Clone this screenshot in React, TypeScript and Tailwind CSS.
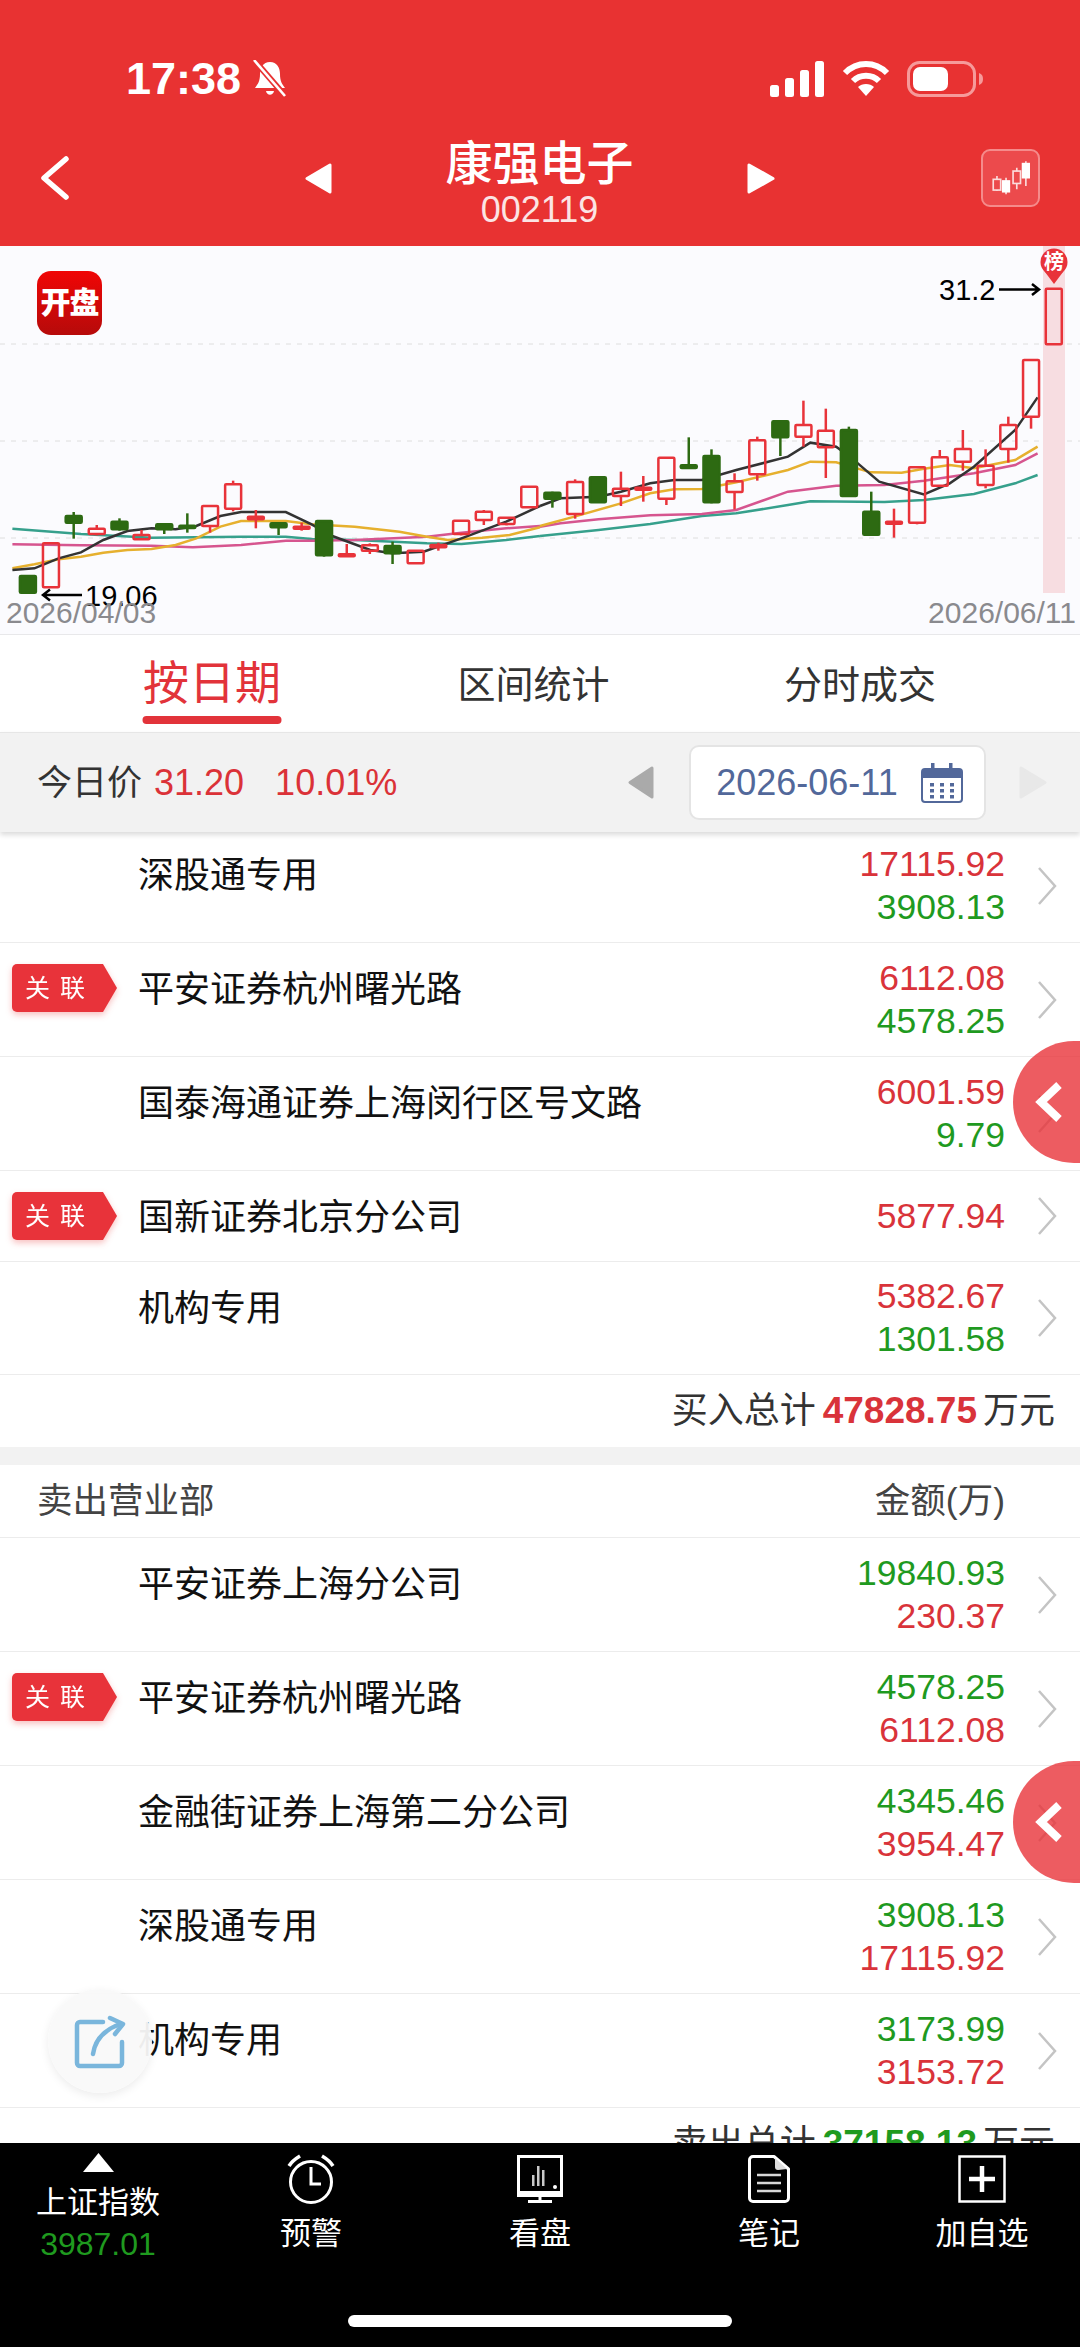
import React from 'react';

type Candle = [number, number, number, number, number, 'r' | 'g'];

// [x, bodyTop, bodyBottom, wickTop, wickBottom, colour], measured on the two halves of the chart
const leftCandles: Candle[] = [
  [81, 1008, 1058, 1005, 1062, 'g'],
  [148, 910, 1042, 910, 1042, 'r'],
  [214, 828, 848, 816, 896, 'g'],
  [281, 866, 882, 855, 886, 'r'],
  [347, 845, 868, 835, 872, 'g'],
  [411, 885, 898, 870, 900, 'r'],
  [477, 853, 868, 850, 882, 'g'],
  [544, 857, 864, 820, 878, 'g'],
  [610, 798, 858, 798, 878, 'r'],
  [677, 733, 806, 722, 814, 'r'],
  [743, 830, 838, 810, 865, 'r'],
  [809, 850, 862, 850, 885, 'g'],
  [876, 860, 866, 848, 872, 'r'],
  [941, 843, 946, 843, 950, 'g'],
  [1007, 943, 948, 912, 948, 'r'],
  [1074, 916, 932, 910, 942, 'r'],
  [1140, 918, 940, 905, 972, 'g'],
  [1207, 932, 970, 932, 970, 'r'],
  [1273, 915, 922, 908, 932, 'r'],
  [1339, 842, 882, 842, 886, 'r'],
  [1405, 815, 840, 810, 855, 'r'],
  [1471, 833, 852, 833, 856, 'r'],
  [1537, 740, 802, 738, 804, 'r'],
];

const rightCandles: Candle[] = [
  [36, 758, 776, 755, 803, 'g'],
  [102, 726, 822, 718, 836, 'r'],
  [168, 712, 787, 712, 787, 'g'],
  [235, 746, 768, 695, 798, 'r'],
  [300, 743, 748, 708, 785, 'r'],
  [367, 653, 776, 653, 795, 'r'],
  [432, 676, 684, 592, 684, 'g'],
  [498, 648, 787, 628, 790, 'g'],
  [565, 724, 756, 700, 808, 'r'],
  [631, 601, 703, 590, 722, 'r'],
  [698, 544, 592, 544, 648, 'g'],
  [765, 555, 590, 482, 620, 'r'],
  [830, 572, 622, 506, 714, 'r'],
  [897, 570, 768, 560, 770, 'g'],
  [962, 815, 884, 755, 884, 'g'],
  [1028, 845, 851, 806, 893, 'r'],
  [1095, 682, 848, 682, 853, 'r'],
  [1161, 652, 737, 630, 740, 'r'],
  [1228, 627, 665, 570, 692, 'r'],
  [1294, 677, 735, 628, 745, 'r'],
  [1360, 555, 627, 530, 668, 'r'],
  [1426, 360, 530, 360, 566, 'r'],
  [1492, 146, 313, 146, 313, 'r'],
];

const avgLines: { color: string; left: number[][]; right: number[][] }[] = [
  {
    color: '#36a08c',
    left: [[36, 866], [235, 882], [440, 893], [700, 890], [830, 890], [905, 897], [1030, 900], [1240, 910], [1340, 912], [1470, 900], [1568, 888]],
    right: [[0, 888], [170, 870], [320, 852], [470, 828], [570, 820], [720, 795], [785, 784], [1000, 786], [1115, 780], [1260, 762], [1380, 730], [1445, 705]],
  },
  {
    color: '#d6558f',
    left: [[36, 913], [235, 916], [440, 917], [560, 922], [700, 915], [830, 902], [905, 902], [1030, 900], [1240, 890], [1340, 878], [1470, 865], [1568, 858]],
    right: [[0, 860], [60, 850], [170, 838], [320, 826], [470, 822], [570, 810], [720, 755], [860, 737], [1000, 735], [1115, 722], [1260, 700], [1380, 675], [1445, 640]],
  },
  {
    color: '#e6b02e',
    left: [[36, 985], [100, 973], [170, 958], [235, 950], [300, 938], [370, 930], [440, 927], [510, 915], [570, 895], [640, 860], [700, 843], [830, 843], [905, 853], [1030, 860], [1160, 875], [1240, 890], [1300, 900], [1400, 893], [1480, 885], [1568, 862]],
    right: [[0, 858], [100, 830], [235, 790], [320, 760], [390, 748], [470, 747], [570, 727], [720, 690], [785, 665], [860, 667], [960, 697], [1050, 698], [1115, 686], [1190, 675], [1260, 685], [1380, 660], [1445, 620]],
  },
  {
    color: '#333333',
    left: [[36, 990], [100, 985], [170, 955], [235, 937], [300, 900], [370, 873], [440, 865], [510, 868], [570, 858], [640, 828], [700, 816], [830, 816], [905, 853], [965, 888], [1075, 930], [1140, 940], [1230, 935], [1340, 895], [1470, 845], [1568, 798]],
    right: [[0, 798], [60, 775], [170, 770], [235, 755], [320, 730], [390, 720], [470, 720], [570, 690], [720, 650], [785, 608], [860, 620], [900, 650], [985, 725], [1115, 763], [1190, 730], [1260, 680], [1380, 570], [1445, 472]],
  },
];

const toY = (y: number) => 240 + y / 3;
const leftX = (x: number) => x / 2.904;
const rightX = (x: number) => 540 + x / 2.904;

const CandleMark = ({ c, fx }: { c: Candle; fx: (x: number) => number }) => {
  const [x, bt, bb, wt, wb, kind] = c;
  const cx = fx(x);
  const stroke = kind === 'r' ? '#e8333a' : '#2d6a12';
  return (
    <g>
      <line x1={cx} x2={cx} y1={toY(wt)} y2={toY(bt)} stroke={stroke} strokeWidth={2.5} />
      <line x1={cx} x2={cx} y1={toY(bb)} y2={toY(wb)} stroke={stroke} strokeWidth={2.5} />
      <rect
        x={cx - 8}
        y={toY(bt)}
        width={16}
        height={Math.max(toY(bb) - toY(bt), 2)}
        rx={1}
        fill={kind === 'r' ? 'none' : stroke}
        stroke={stroke}
        strokeWidth={2.5}
      />
    </g>
  );
};

const Chart = () => (
  <div className="relative h-[389px] bg-[#fbfbfe] border-b border-[#e8e8ea]">
    <svg viewBox="0 246 1080 388" className="block w-[1080px] h-[388px]">
      {[344, 441, 538].map(y => (
        <line key={y} x1={0} x2={1080} y1={y} y2={y} stroke="#dedede" strokeWidth={1} strokeDasharray="5 6" />
      ))}
      <rect x={1043} y={246} width={22} height={347} fill="#f7dde1" />
      {avgLines.map(l => (
        <g key={l.color} fill="none" stroke={l.color} strokeWidth={2.5}>
          <polyline points={l.left.map(p => `${leftX(p[0])},${toY(p[1])}`).join(' ')} />
          <polyline points={l.right.map(p => `${rightX(p[0])},${toY(p[1])}`).join(' ')} />
        </g>
      ))}
      {leftCandles.map(c => <CandleMark key={`l${c[0]}`} c={c} fx={leftX} />)}
      {rightCandles.map(c => <CandleMark key={`r${c[0]}`} c={c} fx={rightX} />)}
      <path d="M1045 272 L1063 272 L1054 284 Z" fill="#e8333a" />
      <circle cx={1054} cy={262} r={13.5} fill="#e8333a" />
      <g fill="none" stroke="#000" strokeWidth={2.5}>
        <path d="M999 289.5 H1039 M1032 284 L1039 289.5 L1032 295" />
        <path d="M82 595 H43 M50 589.5 L43 595 L50 600.5" />
      </g>
    </svg>
    <div className="absolute left-[37px] top-[25px] w-[65px] h-[64px] rounded-[14px] bg-gradient-to-b from-[#f00505] to-[#b60a0a] flex items-center justify-center text-white text-[30px] leading-none font-black tracking-[-1px]">
      开盘
    </div>
    <span className="absolute left-[1043px] top-[5px] w-[22px] text-center text-[20px] leading-[22px] text-white font-bold">榜</span>
    <span className="absolute left-[939px] top-[27px] text-[29px] leading-[34px] text-black">31.2</span>
    <span className="absolute left-[85px] top-[333px] text-[29px] leading-[34px] text-black">19.06</span>
    <span className="absolute left-[6px] top-[350px] text-[30px] leading-[34px] text-[#8a8a8e]">2026/04/03</span>
    <span className="absolute right-[4px] top-[350px] text-[30px] leading-[34px] text-[#8a8a8e]">2026/06/11</span>
  </div>
);

const StatusBar = () => (
  <div className="flex items-center h-[46px] pl-[126px] text-white">
    <span className="text-[45px] leading-[46px] font-semibold">17:38</span>
    <svg viewBox="0 0 38 38" className="w-[38px] h-[38px] ml-[10px]">
      <path d="M19 2 C12 2 9 8 9 14 C9 21 7 24 4 28 H34 C31 24 29 21 29 14 C29 8 26 2 19 2 Z M15 31 H23 C22 36 16 36 15 31 Z" fill="#fff" />
      <line x1={4} y1={1} x2={35} y2={37} stroke="#e83232" strokeWidth={6} />
      <line x1={3} y1={0} x2={34} y2={36} stroke="#fff" strokeWidth={2.6} />
    </svg>
    <svg viewBox="0 0 54 36" className="w-[54px] h-[36px] ml-[481px]" fill="#fff">
      <rect x={0} y={24} width={9} height={12} rx={2.5} />
      <rect x={15} y={17} width={9} height={19} rx={2.5} />
      <rect x={30} y={9} width={9} height={27} rx={2.5} />
      <rect x={45} y={0} width={9} height={36} rx={2.5} />
    </svg>
    <svg viewBox="0 0 48 36" className="w-[48px] h-[36px] ml-[18px]">
      <g fill="none" stroke="#fff" strokeWidth={6} strokeLinecap="butt">
        <path d="M3 12 C15 0 33 0 45 12" />
        <path d="M11 20 C18 13 30 13 37 20" />
      </g>
      <path d="M16 26 C20 22 28 22 32 26 L24 35 Z" fill="#fff" />
    </svg>
    <svg viewBox="0 0 76 36" className="w-[76px] h-[36px] ml-[17px]">
      <rect x={1.5} y={1.5} width={66} height={33} rx={11} fill="none" stroke="#f69a9a" strokeWidth={3} />
      <rect x={6} y={6} width={35} height={24} rx={7} fill="#fff" />
      <path d="M72 12 C75 13 76 15 76 18 C76 21 75 23 72 24 Z" fill="#f69a9a" />
    </svg>
  </div>
);

const TriangleLeft = ({ color, w, h, className }: { color: string; w: number; h: number; className?: string }) => (
  <svg viewBox={`0 0 ${w} ${h}`} width={w} height={h} className={className}>
    <path d={`M${w - 2} 2 V${h - 2} L2 ${h / 2} Z`} fill={color} stroke={color} strokeWidth={3} strokeLinejoin="round" />
  </svg>
);

const TriangleRight = ({ color, w, h, className }: { color: string; w: number; h: number; className?: string }) => (
  <svg viewBox={`0 0 ${w} ${h}`} width={w} height={h} className={className}>
    <path d={`M2 2 V${h - 2} L${w - 2} ${h / 2} Z`} fill={color} stroke={color} strokeWidth={3} strokeLinejoin="round" />
  </svg>
);

const NavBar = () => (
  <div className="flex items-start h-[85px] mt-[38px] pl-[40px] pr-[40px]">
    <svg viewBox="0 0 29 44" className="w-[29px] h-[44px] mt-[16px]">
      <path d="M26 3 L4 22 L26 41" fill="none" stroke="#fff" strokeWidth={5.5} strokeLinecap="round" strokeLinejoin="round" />
    </svg>
    <TriangleLeft color="#fff" w={27} h={31} className="ml-[236px] mt-[23px]" />
    <div className="flex-1 flex flex-col items-center text-white">
      <span className="text-[47px] leading-[46px] font-medium mt-[1px]">康强电子</span>
      <span className="text-[36px] leading-[30px] mt-[8px] text-[#fbe4e4]">002119</span>
    </div>
    <TriangleRight color="#fff" w={28} h={31} className="mt-[23px]" />
    <div className="ml-[206px] mt-[9px] w-[59px] h-[58px] rounded-[9px] border-2 border-[#f58b8b] bg-[#ec4a4c] flex items-center justify-center">
      <svg viewBox="0 0 46 42" className="w-[38px] h-[35px]">
        <g fill="none" stroke="#fbdcdc" strokeWidth={2}>
          <line x1={6} y1={18} x2={6} y2={36} />
          <rect x={1.5} y={22} width={9} height={13} fill="#ec4a4c" />
          <line x1={30} y1={8} x2={30} y2={34} />
          <rect x={25.5} y={12} width={9} height={15} fill="#ec4a4c" />
          <line x1={41} y1={0} x2={41} y2={30} />
          <line x1={17} y1={20} x2={17} y2={40} />
        </g>
        <rect x={12} y={23} width={10} height={15} fill="#fff" />
        <rect x={36} y={2} width={10} height={19} fill="#fff" />
      </svg>
    </div>
  </div>
);

const Tabs = () => (
  <div className="grid grid-cols-3 h-[97px] bg-white pl-[50px] pr-[58px]">
    <div className="relative flex justify-center pt-[22px]">
      <span className="text-[46px] leading-[52px] text-[#e2333a]">按日期</span>
      <span className="absolute bottom-[8px] left-1/2 -translate-x-1/2 w-[139px] h-[8px] rounded-full bg-[#e2333a]" />
    </div>
    <div className="flex justify-center pt-[27px] pr-[5px] text-[38px] leading-[46px] text-[#333]">区间统计</div>
    <div className="flex justify-center pt-[27px] text-[38px] leading-[46px] text-[#333]">分时成交</div>
  </div>
);

const PriceBar = () => (
  <div className="relative z-10 flex items-center h-[100px] pl-[37px] bg-[#f2f2f2] border-t border-[#e6e6e6] shadow-[0_3px_5px_rgba(0,0,0,0.14)]">
    <span className="text-[35px] leading-[44px] text-[#333]">今日价</span>
    <span className="text-[36px] leading-[44px] text-[#db3238] ml-[12px]">31.20</span>
    <span className="text-[36px] leading-[44px] text-[#db3238] ml-[31px]">10.01%</span>
    <TriangleLeft color="#aaaaaa" w={26} h={33} className="ml-[231px]" />
    <div className="flex items-center ml-[35px] w-[297px] h-[75px] pl-[25px] bg-white rounded-[10px] border-2 border-[#e4e4e4] text-[36px] leading-[44px] text-[#52689a]">
      2026-06-11
      <svg viewBox="0 0 42 40" className="w-[42px] h-[40px] ml-[23px]">
        <rect x={1} y={6} width={40} height={33} rx={3} fill="#fff" stroke="#52689a" strokeWidth={2} />
        <path d="M1 9 a3 3 0 0 1 3 -3 H38 a3 3 0 0 1 3 3 V15 H1 Z" fill="#52689a" />
        <rect x={10} y={0} width={3.5} height={11} fill="#52689a" />
        <rect x={28} y={0} width={3.5} height={11} fill="#52689a" />
        <g fill="#52689a">
          {[20, 26, 32].map(y => [9, 19, 29].map(x => <rect key={`${x}-${y}`} x={x} y={y} width={4} height={3.5} />))}
        </g>
      </svg>
    </div>
    <TriangleRight color="#e8e8e8" w={28} h={33} className="ml-[33px]" />
  </div>
);

const RED = '#d9333a';
const GREEN = '#1f9a1f';

const Tag = () => (
  <div className="drop-shadow-[0_3px_3px_rgba(232,50,50,0.3)]">
    <div className="w-[105px] h-[48px] pl-[13px] bg-[#e8333a] text-white text-[25px] leading-[48px] tracking-[10px] [clip-path:path('M5_0H91L105_24L91_48H5A5_5_0_0_1_0_43V5A5_5_0_0_1_5_0Z')]">
      关联
    </div>
  </div>
);

const Row = ({ name, values, tag, height }: { name: string; values: [string, string][]; tag?: boolean; height: string }) => (
  <div className={`flex border-b border-[#ececec] bg-white ${height}`}>
    <div className="flex items-start w-[138px] pl-[12px] pt-[21px]">{tag && <Tag />}</div>
    <div className="flex-1 pt-[23px] text-[36px] leading-[48px] text-[#111]">{name}</div>
    <div className="flex flex-col justify-center items-end w-[300px] text-[35.5px] leading-[43px]">
      {values.map(([v, c]) => (
        <span key={v} style={{ color: c }}>{v}</span>
      ))}
    </div>
    <div className="flex items-center pl-[32px] w-[75px]">
      <svg viewBox="0 0 20 38" className="w-[20px] h-[38px]">
        <path d="M2 1 L18 19 L2 37" fill="none" stroke="#c4c4c4" strokeWidth={2.5} />
      </svg>
    </div>
  </div>
);

const Total = ({ label, value, color }: { label: string; value: string; color: string }) => (
  <div className="flex items-center justify-end h-[72px] pr-[25px] bg-white text-[36px] leading-[44px] text-[#333]">
    {label}
    <span className="font-bold text-[37px] ml-[7px] mr-[6px]" style={{ color }}>{value}</span>
    万元
  </div>
);

const Chevron = () => (
  <svg viewBox="0 0 30 44" className="w-[30px] h-[44px]">
    <path d="M25 5 L7 22 L25 39" fill="none" stroke="#fff" strokeWidth={8} />
  </svg>
);

const SideHandle = ({ className }: { className: string }) => (
  <div className={`absolute left-[1013px] w-[67px] h-[122px] rounded-l-full bg-[#e8333a]/80 flex items-center pl-[21px] ${className}`}>
    <Chevron />
  </div>
);

const List = () => (
  <div className="relative flex-1 overflow-hidden bg-white">
    <div className="-mt-[3px]">
      <Row height="h-[114px]" name="深股通专用" values={[['17115.92', RED], ['3908.13', GREEN]]} />
      <Row height="h-[114px]" tag name="平安证券杭州曙光路" values={[['6112.08', RED], ['4578.25', GREEN]]} />
      <Row height="h-[114px]" name="国泰海通证券上海闵行区号文路" values={[['6001.59', RED], ['9.79', GREEN]]} />
      <Row height="h-[91px]" tag name="国新证券北京分公司" values={[['5877.94', RED]]} />
      <Row height="h-[113px]" name="机构专用" values={[['5382.67', RED], ['1301.58', GREEN]]} />
      <Total label="买入总计" value="47828.75" color={RED} />
      <div className="h-[18px] bg-[#f2f2f2]" />
      <div className="flex items-center justify-between h-[73px] pl-[37px] pr-[75px] border-b border-[#ececec] text-[35.5px] leading-[44px] text-[#444]">
        <span>卖出营业部</span>
        <span>金额(万)</span>
      </div>
      <Row height="h-[114px]" name="平安证券上海分公司" values={[['19840.93', GREEN], ['230.37', RED]]} />
      <Row height="h-[114px]" tag name="平安证券杭州曙光路" values={[['4578.25', GREEN], ['6112.08', RED]]} />
      <Row height="h-[114px]" name="金融街证券上海第二分公司" values={[['4345.46', GREEN], ['3954.47', RED]]} />
      <Row height="h-[114px]" name="深股通专用" values={[['3908.13', GREEN], ['17115.92', RED]]} />
      <Row height="h-[114px]" name="机构专用" values={[['3173.99', GREEN], ['3153.72', RED]]} />
      <Total label="卖出总计" value="37158.13" color={GREEN} />
    </div>
    <SideHandle className="top-[209px]" />
    <SideHandle className="top-[929px]" />
    <div className="absolute left-[48px] top-[1157px] w-[104px] h-[104px] rounded-full bg-[#f9f9f9]/95 shadow-[0_3px_10px_rgba(0,0,0,0.08)] flex items-center justify-center">
      <svg viewBox="0 0 60 65" className="w-[60px] h-[65px]">
        <g fill="none" stroke="#7ab6dc" strokeWidth={4.5} strokeLinecap="round" strokeLinejoin="round">
          <path d="M33 13 H10 a3 3 0 0 0 -3 3 V54 a3 3 0 0 0 3 3 H49 a3 3 0 0 0 3 -3 V33" />
          <path d="M23 45 Q26 24 50 15" />
          <path d="M40 9 L53 15 L45 25" />
        </g>
      </svg>
    </div>
  </div>
);

const FooterItem = ({ label, children }: { label: string; children: React.ReactNode }) => (
  <div className="flex flex-col items-center pt-[11px]">
    <div className="h-[50px] flex items-center justify-center">{children}</div>
    <span className="mt-[13px] text-[31px] leading-[34px] text-white">{label}</span>
  </div>
);

const Footer = () => (
  <div className="relative grid grid-cols-[196px_230px_228px_230px_196px] h-[204px] bg-black">
    <div className="flex flex-col items-center pt-[10px]">
      <svg viewBox="0 0 31 19" className="w-[31px] h-[19px]">
        <path d="M15.5 0 L31 19 H0 Z" fill="#fff" />
      </svg>
      <span className="mt-[14px] text-[31px] leading-[34px] text-white">上证指数</span>
      <span className="mt-[6px] text-[32px] leading-[36px] text-[#1f9a1f]">3987.01</span>
    </div>
    <FooterItem label="预警">
      <svg viewBox="0 0 48 50" className="w-[48px] h-[50px]" fill="none" stroke="#fff" strokeWidth={3}>
        <circle cx={24} cy={28} r={20.5} />
        <path d="M24 13 V30 H34" />
        <path d="M2 12 C5 7 8 5 13 2" strokeWidth={3.5} />
        <path d="M46 12 C43 7 40 5 35 2" strokeWidth={3.5} />
      </svg>
    </FooterItem>
    <FooterItem label="看盘">
      <svg viewBox="0 0 46 48" className="w-[46px] h-[48px]" fill="none" stroke="#fff">
        <rect x={1.5} y={1.5} width={43} height={39} strokeWidth={3} />
        <rect x={0} y={36} width={46} height={5} fill="#fff" stroke="none" />
        <path d="M23 41 V46 M11 46.5 H35" strokeWidth={3} />
        <g fill="#c9c9c9" stroke="none">
          <rect x={15} y={20} width={2.5} height={11} />
          <rect x={20} y={11} width={2.5} height={20} />
          <rect x={25} y={15} width={2.5} height={16} />
        </g>
        <circle cx={38} cy={32} r={2} fill="#fff" stroke="none" />
      </svg>
    </FooterItem>
    <FooterItem label="笔记">
      <svg viewBox="0 0 42 48" className="w-[42px] h-[48px]" fill="none" stroke="#fff" strokeWidth={3}>
        <path d="M26 1.5 H5 a3.5 3.5 0 0 0 -3.5 3.5 V43 a3.5 3.5 0 0 0 3.5 3.5 H37 a3.5 3.5 0 0 0 3.5 -3.5 V14 Z" strokeLinejoin="round" />
        <path d="M27 3 L39 14 L30 15 a3 3 0 0 1 -3 -3 Z" fill="#ddd" stroke="none" />
        <path d="M9 20 H33 M9 28 H33 M9 36 H33" stroke="#d8d8d8" strokeWidth={2.5} />
      </svg>
    </FooterItem>
    <FooterItem label="加自选">
      <svg viewBox="0 0 48 48" className="w-[48px] h-[48px]" fill="none" stroke="#fff">
        <rect x={1.5} y={1.5} width={45} height={45} strokeWidth={2.5} />
        <path d="M24 11 V37 M11 24 H37" strokeWidth={4.5} />
      </svg>
    </FooterItem>
    <div className="absolute left-[348px] top-[172px] w-[384px] h-[12px] rounded-full bg-white" />
  </div>
);

export default function App() {
  return (
    <div className="flex flex-col w-[1080px] h-[2347px] overflow-hidden bg-white [font-family:'Liberation_Sans','Noto_Sans_CJK_SC',sans-serif]">
      <div className="h-[246px] pt-[56px] bg-[#e83232]">
        <StatusBar />
        <NavBar />
      </div>
      <Chart />
      <Tabs />
      <PriceBar />
      <List />
      <Footer />
    </div>
  );
}
